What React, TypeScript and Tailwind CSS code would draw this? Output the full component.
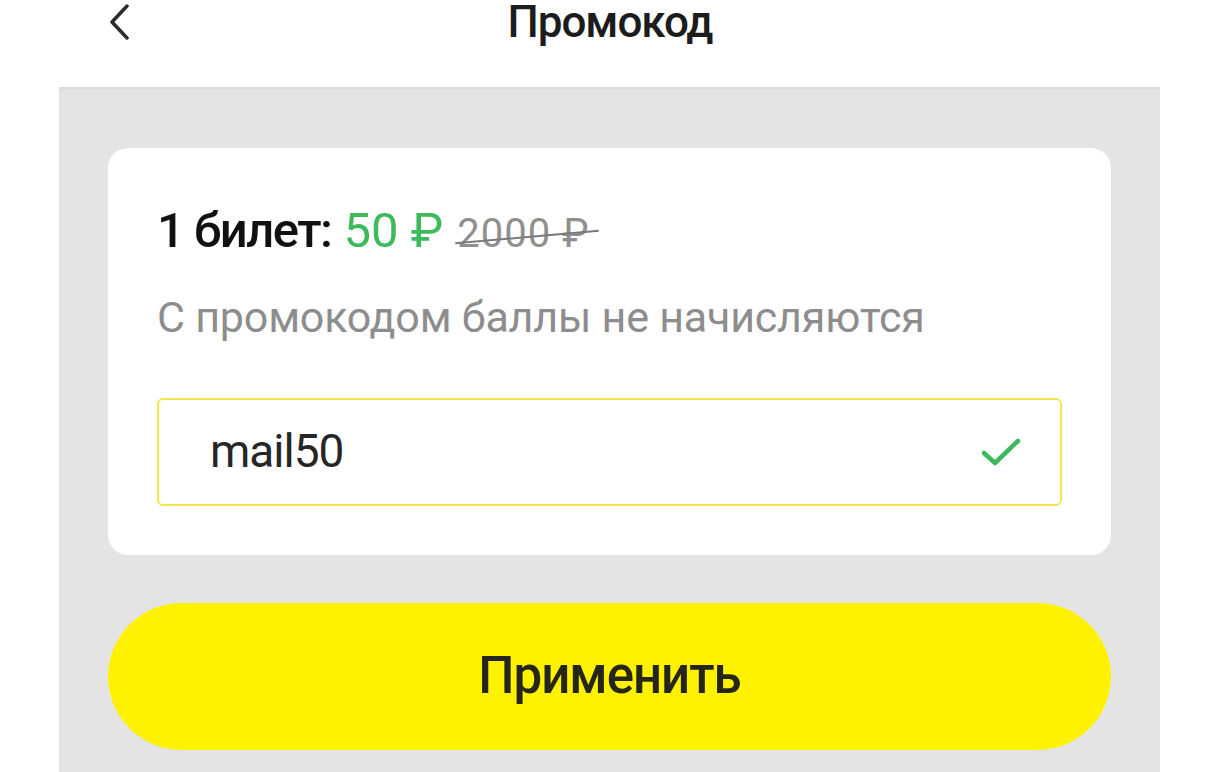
import React from 'react';

const font = { fontFamily: 'Roboto, "Noto Sans", sans-serif' };

export default function App() {
  return (
    <div className="w-[1220px] h-[772px] bg-white overflow-hidden text-[#1a1a1a]" style={font}>
      {/* Header */}
      <div className="relative h-[87px] flex justify-center">
        <svg className="absolute left-[106px] top-[2px]" width="26" height="38" viewBox="0 0 26 38" fill="none">
          <path d="M21 4 L6 20 L21 36" stroke="#2a2a2a" strokeWidth="3.5" strokeLinecap="round" strokeLinejoin="round" />
        </svg>
        <h1 className="text-[44px] leading-[44px] font-medium tracking-[-1px] text-[#1c1c1c]">Промокод</h1>
      </div>

      {/* Gray panel */}
      <div className="ml-[59px] w-[1101px] h-[685px] bg-[#e4e4e4] border-t-2 border-[#dadada] px-[49px] pt-[59px]">
        <div className="bg-white rounded-[20px] h-[407px] pl-[49px] pr-[49px] pt-[58px]">
          <div className="flex items-baseline h-[50px]">
            <span className="text-[49px] leading-[50px] font-medium tracking-[-1.5px] text-[#111]">1 билет:</span>
            <span className="ml-[12px] text-[49px] leading-[50px] text-[#3dba5c]">50 ₽</span>
            <span className="relative ml-[14px] text-[40px] leading-[40px] tracking-[1px] text-[#8f8f8f]">
              2000 ₽
              <span className="absolute left-[-2px] right-[-10px] top-[22px] h-[2px] bg-[#7a7a7a] -rotate-[5deg]" />
            </span>
          </div>
          <p className="mt-[36px] text-[43px] leading-[50px] text-[#8d8d8d] tracking-[-0.2px]">С промокодом баллы не начисляются</p>
          <div className="mt-[56px] h-[108px] border-2 border-[#f3e84a] rounded-[6px] flex items-center pl-[51px] pr-[38px]">
            <span className="flex-1 text-[46px] text-[#262626] tracking-[-1px] pb-[2px]">mail50</span>
            <svg width="42" height="32" viewBox="0 0 42 32" fill="none">
              <path d="M4 17 L15 27 L38 5" stroke="#3cba5b" strokeWidth="4.5" strokeLinecap="round" strokeLinejoin="round" />
            </svg>
          </div>
        </div>
        <button className="mt-[48px] w-full h-[147px] rounded-full bg-[#fff200] flex items-center justify-center text-[51px] font-medium tracking-[-1px] text-[#262618]">
          Применить
        </button>
      </div>
    </div>
  );
}
